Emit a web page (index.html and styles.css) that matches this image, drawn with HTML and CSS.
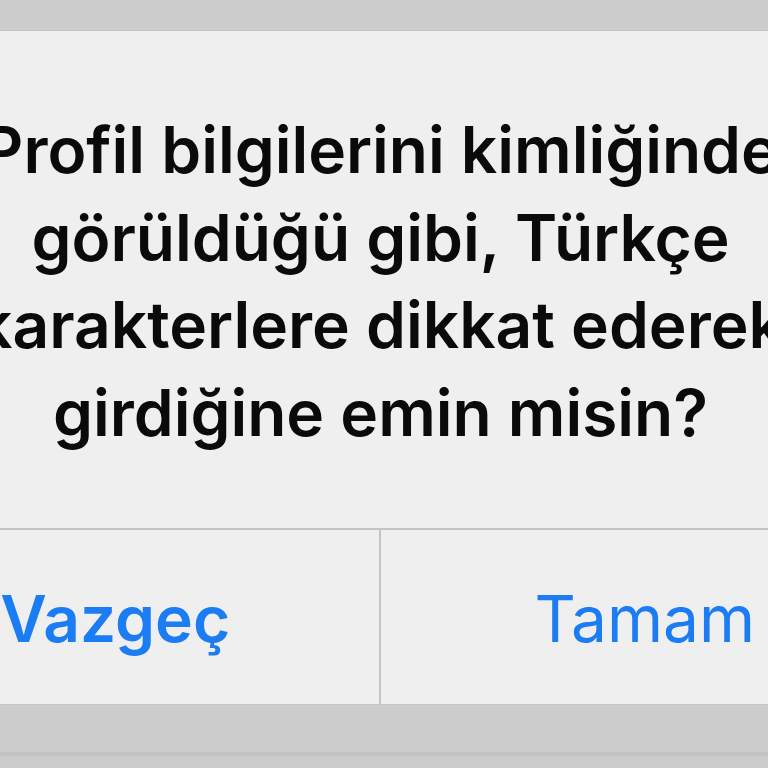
FILE: index.html
```html
<!DOCTYPE html>
<html lang="tr">
<head>
<meta charset="utf-8">
<title>Uyarı</title>
<link rel="stylesheet" href="styles.css">
</head>
<body>
<div class="screen">
  <div class="band band-top"></div>
  <div class="alert">
    <p class="message">Profil bilgilerini kimliğinde<br>görüldüğü gibi, Türkçe<br>karakterlere dikkat ederek<br>girdiğine emin misin?</p>
    <div class="actions">
      <button class="action action-cancel">Vazgeç</button>
      <button class="action action-ok">Tamam</button>
    </div>
  </div>
  <div class="band band-bottom"></div>
</div>
</body>
</html>
```

FILE: styles.css
```css
html, body {
  margin: 0;
  padding: 0;
  background: #cccccc;
}
body {
  width: 768px;
  height: 768px;
  overflow: hidden;
  font-family: Inter, "Liberation Sans", sans-serif;
}
.screen {
  width: 768px;
  height: 768px;
  overflow: hidden;
  display: flex;
  flex-direction: column;
}
.band {
  background: #cccccc;
  flex: none;
}
.band-top {
  height: 30px;
  border-bottom: 1px solid #c3c3c3;
}
.band-bottom {
  flex: 1;
  border-top: 1px solid #c6c6c6;
  background: linear-gradient(#cccccc 0 47px, #c4c4c4 47px 51px, #cccccc 51px);
}
.alert {
  width: 1057px;
  margin-left: -148px;
  background: #efefef;
  flex: none;
}
.message {
  margin: 0;
  padding: 75px 0 72px;
  text-align: center;
  font-size: 64px;
  line-height: 87.5px;
  font-weight: 600;
  color: #0a0a0a;
  white-space: nowrap;
  letter-spacing: 0;
}
.actions {
  display: grid;
  grid-template-columns: 1fr 1fr;
  border-top: 2px solid #c4c4c4;
  height: 174px;
}
.action {
  border: 0;
  margin: 0;
  padding: 0;
  background: transparent;
  font-family: Inter, "Liberation Sans", sans-serif;
  font-size: 64px;
  line-height: 87.5px;
  color: #1b7cf4;
  display: flex;
  align-items: center;
  justify-content: center;
  padding-top: 4px;
}
.action-cancel {
  font-weight: 600;
  border-right: 2px solid #c4c4c4;
}
.action-ok {
  font-weight: 400;
}
```
